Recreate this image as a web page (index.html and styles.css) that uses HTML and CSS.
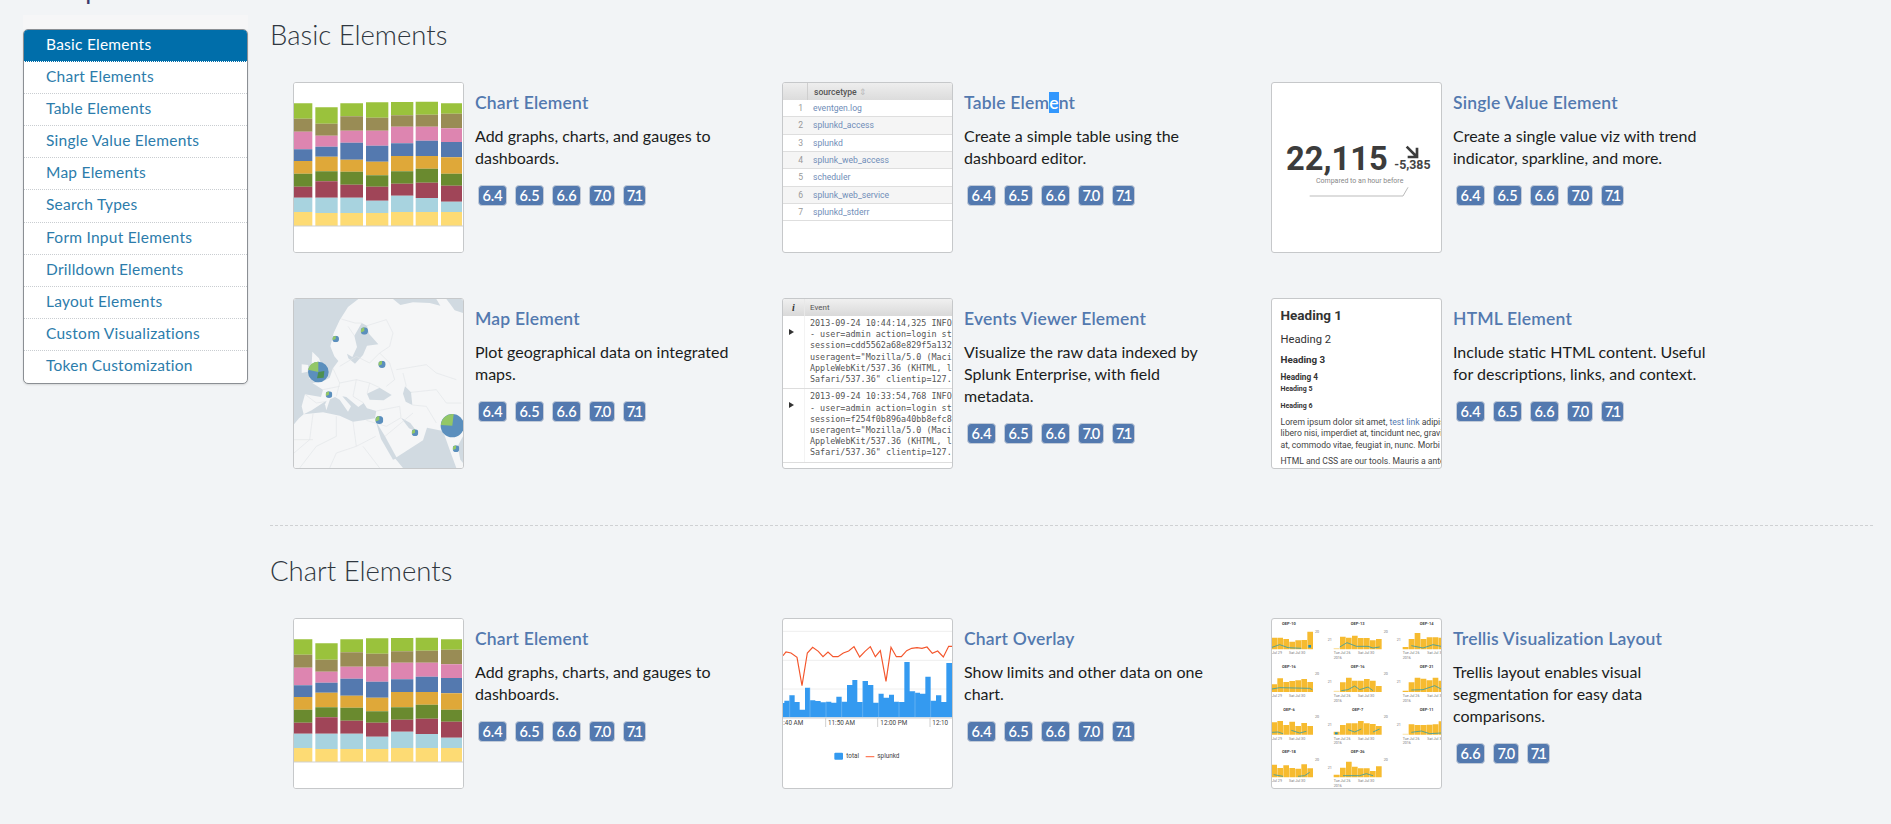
FILE: index.html
```html
<!DOCTYPE html>
<html lang="en">
<head>
<meta charset="utf-8">
<title>Examples</title>
<link rel="stylesheet" href="styles.css">
</head>
<body>
<svg class="defs" aria-hidden="true">
  <symbol id="stack" viewBox="42 40 507 507">
    <rect x="42" y="40" width="507" height="507" fill="#fff"/>
    <path fill="#9ac23c" d="M42 101H97V147H42ZM106 113H173V162H106ZM181 101H249V140H181ZM258 98H325V144H258ZM333 97H400V137H333ZM407 96H474V135H407ZM483 101H546V132H483Z"/>
    <path fill="#998c55" d="M42 147H97V186H42ZM106 162H173V198H106ZM181 140H249V183H181ZM258 144H325V183H258ZM333 137H400V171H333ZM407 135H474V171H407ZM483 132H546V176H483Z"/>
    <path fill="#dd85b0" d="M42 186H97V239H42ZM106 198H173V231H106ZM181 183H249V219H181ZM258 183H325V228H258ZM333 171H400V221H333ZM407 171H474V213H407ZM483 176H546V217H483Z"/>
    <path fill="#5479af" d="M42 239H97V274H42ZM106 231H173V261H106ZM181 219H249V270H181ZM258 228H325V276H258ZM333 221H400V259H333ZM407 213H474V259H407ZM483 217H546V263H483Z"/>
    <path fill="#dfa839" d="M42 274H97V312H42ZM106 261H173V305H106ZM181 270H249V306H181ZM258 276H325V317H258ZM333 259H400V305H333ZM407 259H474V297H407ZM483 263H546V312H483Z"/>
    <path fill="#6a8a2f" d="M42 312H97V351H42ZM106 305H173V335H106ZM181 306H249V345H181ZM258 317H325V351H258ZM333 305H400V342H333ZM407 297H474V339H407ZM483 312H546V348H483Z"/>
    <path fill="#a04558" d="M42 351H97V384H42ZM106 335H173V384H106ZM181 345H249V384H181ZM258 351H325V393H258ZM333 342H400V378H333ZM407 339H474V385H407ZM483 348H546V396H483Z"/>
    <path fill="#a8d3df" d="M42 384H97V427H42ZM106 384H173V430H106ZM181 384H249V430H181ZM258 393H325V430H258ZM333 378H400V427H333ZM407 385H474V427H407ZM483 396H546V427H483Z"/>
    <path fill="#fddb74" d="M42 427H97V468H42ZM106 430H173V468H106ZM181 430H249V468H181ZM258 430H325V468H258ZM333 427H400V468H333ZM407 427H474V468H407ZM483 427H546V468H483Z"/>
    <rect x="42" y="468" width="507" height="2" fill="#bbb"/>
  </symbol>
  <symbol id="minipie" viewBox="-10 -10 20 20">
    <circle r="10" fill="#5b8fbd"/>
    <path fill="#93c767" d="M0 0V-10A10 10 0 0 0 -9 4Z"/>
  </symbol>
</svg>

<h1 class="page-title">Examples</h1>

<div class="layout">
  <aside class="side">
    <div class="side-strip"></div>
    <ul class="menu">
      <li class="menu-item is-active"><a>Basic Elements</a></li>
      <li class="menu-item"><a>Chart Elements</a></li>
      <li class="menu-item"><a>Table Elements</a></li>
      <li class="menu-item"><a>Single Value Elements</a></li>
      <li class="menu-item"><a>Map Elements</a></li>
      <li class="menu-item"><a>Search Types</a></li>
      <li class="menu-item"><a>Form Input Elements</a></li>
      <li class="menu-item"><a>Drilldown Elements</a></li>
      <li class="menu-item"><a>Layout Elements</a></li>
      <li class="menu-item"><a>Custom Visualizations</a></li>
      <li class="menu-item"><a>Token Customization</a></li>
    </ul>
  </aside>

  <main class="main">
    <section class="section">
      <h2 class="section-title">Basic Elements</h2>
      <div class="cards">

        <article class="card">
          <div class="thumb"><svg class="art"><use href="#stack"/></svg></div>
          <div class="info">
            <h3 class="card-title">Chart Element</h3>
            <p class="card-desc">Add graphs, charts, and gauges to dashboards.</p>
            <div class="badges"><span class="badge">6.4</span><span class="badge">6.5</span><span class="badge">6.6</span><span class="badge">7.0</span><span class="badge">7.1</span></div>
          </div>
        </article>

        <article class="card">
          <div class="thumb">
            <div class="tbl">
              <div class="tbl-head"><span class="tbl-num"></span><span class="tbl-col">sourcetype <i class="tbl-sort">⇕</i></span></div>
              <div class="tbl-row"><span class="tbl-num">1</span><span class="tbl-name">eventgen.log</span></div>
              <div class="tbl-row tbl-alt"><span class="tbl-num">2</span><span class="tbl-name">splunkd_access</span></div>
              <div class="tbl-row"><span class="tbl-num">3</span><span class="tbl-name">splunkd</span></div>
              <div class="tbl-row tbl-alt"><span class="tbl-num">4</span><span class="tbl-name">splunk_web_access</span></div>
              <div class="tbl-row"><span class="tbl-num">5</span><span class="tbl-name">scheduler</span></div>
              <div class="tbl-row tbl-alt"><span class="tbl-num">6</span><span class="tbl-name">splunk_web_service</span></div>
              <div class="tbl-row"><span class="tbl-num">7</span><span class="tbl-name">splunkd_stderr</span></div>
            </div>
          </div>
          <div class="info">
            <h3 class="card-title">Table Elem<span class="selected">e</span>nt</h3>
            <p class="card-desc">Create a simple table using the dashboard editor.</p>
            <div class="badges"><span class="badge">6.4</span><span class="badge">6.5</span><span class="badge">6.6</span><span class="badge">7.0</span><span class="badge">7.1</span></div>
          </div>
        </article>

        <article class="card">
          <div class="thumb">
            <svg class="art" viewBox="37 40 507 507">
              <text class="sv-main" x="79" y="300">22,115</text>
              <path class="sv-arrow" d="M441 231L469 259M444 262H472V234"/>
              <text class="sv-delta" x="404" y="299">-5,385</text>
              <text class="sv-note" x="169" y="341">Compared to an hour before</text>
              <path class="sv-spark" d="M150 379H430L445 353"/>
            </svg>
          </div>
          <div class="info">
            <h3 class="card-title">Single Value Element</h3>
            <p class="card-desc">Create a single value viz with trend indicator, sparkline, and more.</p>
            <div class="badges"><span class="badge">6.4</span><span class="badge">6.5</span><span class="badge">6.6</span><span class="badge">7.0</span><span class="badge">7.1</span></div>
          </div>
        </article>

        <article class="card">
          <div class="thumb">
            <svg class="art" viewBox="43 28 507 507">
              <rect class="land" x="43" y="28" width="507" height="507"/>
              <path class="sea" d="M43 28H236L205 52L180 92L162 130L152 170L164 200L176 214L160 236L150 264L128 276L98 280L130 300L124 322L76 314L66 350L72 374L58 386L43 404Z"/>
              <path class="sea" d="M340 28H470L482 48L450 40L400 38L362 46Z"/>
              <path class="sea" d="M500 28H550V70L525 62L512 44Z"/>
              <path class="sea" d="M246 100L262 108L268 132L296 164L262 168L250 196L226 222L206 206L202 192L218 202L232 172L224 138Z"/>
              <path class="sea" d="M72 374L96 362L135 336L166 322L180 330L205 366L214 350L188 320L200 322L236 352L252 340L262 356L290 364L286 386L250 392L220 396L180 378L130 368Z"/>
              <path class="sea" d="M262 312L300 294L336 316L312 332L270 330Z"/>
              <path class="sea" d="M376 290L394 308L398 346L378 336L370 312Z"/>
              <path class="sea" d="M288 394L316 440L352 506L340 510L304 448Z"/>
              <path class="sea" d="M364 384L392 400L412 426L388 416Z"/>
              <path class="sea" d="M370 535L346 506L430 452L442 414L490 424L510 480L530 535Z"/>
              <path class="sea" d="M534 470L550 440V520L542 510Z"/>
              <path class="land" d="M98 186L118 206L128 232L140 256L112 260L88 268L110 240L96 224Z"/>
              <path class="land" d="M66 224L86 226L84 246L66 250Z"/>
              <path class="land" d="M140 362L152 326L146 322L136 344Z"/>
              <path class="map-lines" d="M185 88L226 100L246 100M205 110L224 138M262 108L320 90L340 130L330 170L300 190L330 220L345 270L320 290M180 230L230 200L270 220L300 190M160 236L180 280L230 270L270 280L300 294M180 280L170 320M230 270L220 320L252 340M270 280L262 312M130 300L180 290M76 314L110 340L135 336M350 240L440 225L470 250L530 270M370 250L380 290M394 308L470 300L500 340L545 340M398 346L440 350L470 400M290 364L360 350L364 384M260 392L320 410L364 384M100 372L90 450L43 490M170 380V440L110 470L60 535M220 396L230 470L170 490L150 535M288 440L230 470M250 470L300 535M316 440L400 370M43 450L100 450"/>
              <path class="big-pie" d="M116 247m-31 0a31 31 0 1 0 62 0a31 31 0 1 0-62 0"/>
              <path class="big-wedge" d="M116 247L116 216A31 31 0 0 0 85 240Z"/>
              <path class="deep-wedge" d="M116 247L134 244L132 264L112 266Z"/>
              <path class="big-pie" d="M518 408m-35 0a35 35 0 1 0 70 0a35 35 0 1 0-70 0"/>
              <path class="big-wedge" d="M518 408L522 373A35 35 0 0 0 484 406Z"/>
              <use href="#minipie" x="243" y="113" width="22" height="22"/>
              <use href="#minipie" x="158" y="138" width="20" height="20"/>
              <use href="#minipie" x="296" y="213" width="22" height="22"/>
              <use href="#minipie" x="138" y="305" width="20" height="20"/>
              <use href="#minipie" x="287" y="379" width="24" height="24"/>
              <use href="#minipie" x="396" y="419" width="20" height="20"/>
              <use href="#minipie" x="519" y="467" width="20" height="20"/>
            </svg>
          </div>
          <div class="info">
            <h3 class="card-title">Map Element</h3>
            <p class="card-desc">Plot geographical data on integrated maps.</p>
            <div class="badges"><span class="badge">6.4</span><span class="badge">6.5</span><span class="badge">6.6</span><span class="badge">7.0</span><span class="badge">7.1</span></div>
          </div>
        </article>

        <article class="card">
          <div class="thumb">
            <div class="ev">
              <div class="ev-head"><span class="ev-gutter ev-i">i</span><span class="ev-col">Event</span></div>
              <div class="ev-row"><span class="ev-gutter"><b class="ev-arrow"></b></span><pre class="ev-text">2013-09-24 10:44:14,325 INFO
- user=admin action=login st
session=cdd5562a68e829f5a132
useragent="Mozilla/5.0 (Maci
AppleWebKit/537.36 (KHTML, l
Safari/537.36" clientip=127.</pre></div>
              <div class="ev-row"><span class="ev-gutter"><b class="ev-arrow"></b></span><pre class="ev-text">2013-09-24 10:33:54,768 INFO
- user=admin action=login st
session=f254f0b896a40bb8efc8
useragent="Mozilla/5.0 (Maci
AppleWebKit/537.36 (KHTML, l
Safari/537.36" clientip=127.</pre></div>
            </div>
          </div>
          <div class="info">
            <h3 class="card-title">Events Viewer Element</h3>
            <p class="card-desc">Visualize the raw data indexed by Splunk Enterprise, with field metadata.</p>
            <div class="badges"><span class="badge">6.4</span><span class="badge">6.5</span><span class="badge">6.6</span><span class="badge">7.0</span><span class="badge">7.1</span></div>
          </div>
        </article>

        <article class="card">
          <div class="thumb">
            <div class="doc">
              <div class="doc-h1">Heading 1</div>
              <div class="doc-h2">Heading 2</div>
              <div class="doc-h3">Heading 3</div>
              <div class="doc-h4">Heading 4</div>
              <div class="doc-h5">Heading 5</div>
              <div class="doc-h6">Heading 6</div>
              <div class="doc-p">Lorem ipsum dolor sit amet, <span class="doc-link">test link</span> adipiscing
libero nisi, imperdiet at, tincidunt nec, gravida
at, commodo vitae, feugiat in, nunc. Morbi</div>
              <div class="doc-p2">HTML and CSS are our tools. Mauris a ante</div>
            </div>
          </div>
          <div class="info">
            <h3 class="card-title">HTML Element</h3>
            <p class="card-desc">Include static HTML content. Useful for descriptions, links, and context.</p>
            <div class="badges"><span class="badge">6.4</span><span class="badge">6.5</span><span class="badge">6.6</span><span class="badge">7.0</span><span class="badge">7.1</span></div>
          </div>
        </article>
      </div>
    </section>

    <hr class="divider">

    <section class="section">
      <h2 class="section-title">Chart Elements</h2>
      <div class="cards">
        <article class="card">
          <div class="thumb"><svg class="art"><use href="#stack"/></svg></div>
          <div class="info">
            <h3 class="card-title">Chart Element</h3>
            <p class="card-desc">Add graphs, charts, and gauges to dashboards.</p>
            <div class="badges"><span class="badge">6.4</span><span class="badge">6.5</span><span class="badge">6.6</span><span class="badge">7.0</span><span class="badge">7.1</span></div>
          </div>
        </article>

        <article class="card">
          <div class="thumb">
            <svg class="art" viewBox="41 28 507 507">
              <path class="ov-grid" d="M41 65H548M41 152H548M41 238H548"/>
              <path class="ov-bars" d="M41 323V280H45V273H60V257H76V277H91V300H107V234H122V272H138V274H154V278H170V276H186V279H201V261H217V276H233V226H249V211H264V277H280V214H296V226H312V279H328V252H343V264H359V255H374V276H389V277H405V157H421V245H437V249H452V252H468V201H484V273H500V257H516V277H531V160H548V323Z"/>
              <path class="ov-seps" d="M61 323V257M122 323V234M170 323V276M217 323V276M280 323V214M328 323V252M389 323V277M437 323V245M484 323V273"/>
              <path class="ov-line" d="M41 138L50 127L65 130L83 143L98 228L114 130L130 113L147 125L161 141L176 127L191 141L206 141L222 130L238 124L254 111L271 142L287 125L303 111L318 141L333 123L350 215L365 113L381 141L396 141L412 123L427 116L443 114L458 116L473 112L489 131L505 124L522 142L538 110L548 110"/>
              <path class="ov-axis" d="M41 325H548M169 325V352M325 325V352M482 325V352"/>
              <text class="ov-tick" x="42" y="346">:40 AM</text>
              <text class="ov-tick" x="176" y="346">11:50 AM</text>
              <text class="ov-tick" x="333" y="346">12:00 PM</text>
              <text class="ov-tick" x="489" y="346">12:10</text>
              <rect class="ov-key" x="195" y="429" width="26" height="21" rx="3"/>
              <text class="ov-tick" x="231" y="446">total</text>
              <path class="ov-keyline" d="M289 441H315"/>
              <text class="ov-tick" x="324" y="446">splunkd</text>
            </svg>
          </div>
          <div class="info">
            <h3 class="card-title">Chart Overlay</h3>
            <p class="card-desc">Show limits and other data on one chart.</p>
            <div class="badges"><span class="badge">6.4</span><span class="badge">6.5</span><span class="badge">6.6</span><span class="badge">7.0</span><span class="badge">7.1</span></div>
          </div>
        </article>

        <article class="card">
          <div class="thumb">
            <svg class="art" viewBox="37 28 507 507">
              <path class="tr-bars" d="M37 119V84H52V119ZM53 119V84H70V119ZM71 119V88H88V119ZM89 119V96H106V119ZM107 119V92H124V119ZM125 119V91H142V119ZM143 119V66H160V119Z
              M241 119V81H258V119ZM259 119V84H276V119ZM277 119V78H294V119ZM295 119V85H312V119ZM313 119V85H330V119ZM331 119V92H348V119ZM349 119V88H366V119Z
              M429 119V112H446V119ZM447 119V88H464V119ZM465 119V70H482V119ZM483 119V88H500V119ZM501 119V83H518V119ZM519 119V83H536V119ZM537 119V84H544V119Z
              M37 247V224H52V247ZM53 247V206H70V247ZM71 247V217H88V247ZM89 247V214H106V247ZM107 247V212H124V247ZM125 247V208H142V247ZM143 247V217H160V247Z
              M241 247V218H258V247ZM259 247V204H276V247ZM277 247V213H294V247ZM295 247V213H312V247ZM313 247V208H330V247ZM331 247V213H348V247ZM349 247V229H366V247Z
              M429 247V243H446V247ZM447 247V218H464V247ZM465 247V204H482V247ZM483 247V207H500V247ZM501 247V212H518V247ZM519 247V204H536V247ZM537 247V213H544V247Z
              M37 375V338H52V375ZM53 375V334H70V375ZM71 375V346H88V375ZM89 375V336H106V375ZM107 375V349H124V375ZM125 375V340H142V375ZM143 375V349H160V375Z
              M222 375V366H240V375ZM241 375V346H258V375ZM259 375V341H276V375ZM277 375V341H294V375ZM295 375V334H312V375ZM313 375V341H330V375ZM331 375V343H348V375ZM349 375V349H366V375Z
              M447 375V344H464V375ZM465 375V346H482V375ZM483 375V346H500V375ZM501 375V345H518V375ZM519 375V344H536V375ZM537 375V335H544V375Z
              M37 503V465H52V503ZM53 503V475H70V503ZM71 503V467H88V503ZM89 503V475H106V503ZM107 503V477H124V503ZM125 503V464H142V503ZM143 503V476H160V503Z
              M222 503V495H240V503ZM241 503V474H258V503ZM259 503V456H276V503ZM277 503V471H294V503ZM295 503V476H312V503ZM313 503V476H330V503ZM331 503V484H348V503ZM349 503V470H366V503Z"/>
              <path class="tr-faint" d="M222 119V115H240V119ZM429 375V372H446V375ZM222 247V243H240V247Z"/>
              <path class="tr-line" d="M37 113L60 105L85 114L125 116M240 112L262 99L290 110L325 110L340 115L360 112M455 108L490 115L520 105L544 110M37 238L60 234L150 236L158 240M245 243L265 240L285 229L300 240L325 232L340 243M455 241L490 240L525 228L544 238M37 368L55 367L70 372M95 362L120 370L140 365M265 360L285 367L305 358M340 367L360 358M455 368L485 364L510 372L544 370M42 495L70 500M115 500L135 498L150 488M250 498L300 498L320 492L340 498"/>
              <rect class="tr-mark" x="146" y="106" width="8" height="8"/>
              <rect class="tr-mark" x="226" y="368" width="8" height="6"/>
              <text class="tr-title" x="88" y="47">OEP-10</text><text class="tr-title" x="294" y="47">OEP-13</text><text class="tr-title" x="501" y="47">OEP-14</text>
              <text class="tr-title" x="88" y="175">OEP-16</text><text class="tr-title" x="294" y="175">OEP-16</text><text class="tr-title" x="501" y="175">OEP-21</text>
              <text class="tr-title" x="88" y="303">OEP-6</text><text class="tr-title" x="294" y="303">OEP-7</text><text class="tr-title" x="501" y="303">OEP-11</text>
              <text class="tr-title" x="88" y="431">OEP-18</text><text class="tr-title" x="294" y="431">OEP-26</text>
              <text class="tr-tick" x="166" y="69">20</text><text class="tr-tick" x="372" y="69">20</text><text class="tr-tick" x="204" y="93">21</text><text class="tr-tick" x="411" y="93">21</text>
              <text class="tr-tick" x="166" y="197">20</text><text class="tr-tick" x="372" y="197">20</text><text class="tr-tick" x="204" y="221">21</text><text class="tr-tick" x="411" y="221">21</text>
              <text class="tr-tick" x="166" y="325">20</text><text class="tr-tick" x="372" y="325">20</text><text class="tr-tick" x="204" y="349">21</text><text class="tr-tick" x="411" y="349">21</text>
              <text class="tr-tick" x="166" y="454">20</text><text class="tr-tick" x="372" y="454">20</text><text class="tr-tick" x="204" y="478">21</text>
              <text class="tr-tick" x="37" y="134">Jul 29</text><text class="tr-tick" x="88" y="134">Sat Jul 30</text><text class="tr-tick" x="222" y="134">Tue Jul 26</text><text class="tr-tick" x="295" y="134">Sat Jul 30</text><text class="tr-tick" x="429" y="134">Tue Jul 26</text><text class="tr-tick" x="503" y="134">Sat Jul 30</text>
              <text class="tr-tick" x="37" y="262">Jul 29</text><text class="tr-tick" x="88" y="262">Sat Jul 30</text><text class="tr-tick" x="222" y="262">Tue Jul 26</text><text class="tr-tick" x="295" y="262">Sat Jul 30</text><text class="tr-tick" x="429" y="262">Tue Jul 26</text><text class="tr-tick" x="503" y="262">Sat Jul 30</text>
              <text class="tr-tick" x="37" y="390">Jul 29</text><text class="tr-tick" x="88" y="390">Sat Jul 30</text><text class="tr-tick" x="222" y="390">Tue Jul 26</text><text class="tr-tick" x="295" y="390">Sat Jul 30</text><text class="tr-tick" x="429" y="390">Tue Jul 26</text><text class="tr-tick" x="503" y="390">Sat Jul 30</text>
              <text class="tr-tick" x="37" y="518">Jul 29</text><text class="tr-tick" x="88" y="518">Sat Jul 30</text><text class="tr-tick" x="222" y="518">Tue Jul 26</text><text class="tr-tick" x="295" y="518">Sat Jul 30</text>
              <text class="tr-tick" x="222" y="148">2016</text><text class="tr-tick" x="429" y="148">2016</text><text class="tr-tick" x="222" y="276">2016</text><text class="tr-tick" x="429" y="276">2016</text><text class="tr-tick" x="222" y="404">2016</text><text class="tr-tick" x="429" y="404">2016</text><text class="tr-tick" x="222" y="532">2016</text>
            </svg>
          </div>
          <div class="info">
            <h3 class="card-title">Trellis Visualization Layout</h3>
            <p class="card-desc">Trellis layout enables visual segmentation for easy data comparisons.</p>
            <div class="badges"><span class="badge">6.6</span><span class="badge">7.0</span><span class="badge">7.1</span></div>
          </div>
        </article>
      </div>
    </section>
  </main>
</div>
</body>
</html>
```
FILE: styles.css
```css
* { box-sizing: border-box; }
html, body { height: 100%; overflow: hidden; }
body {
  margin: 0;
  background: #f2f4f6;
  color: #1a1c20;
  font-family: "Lato", "Liberation Sans", sans-serif;
}
.defs { display: none; }

.page-title {
  margin: -26px 0 -4px;
  padding-left: 23px;
  height: 30px;
  font-size: 26px;
  line-height: 30px;
  font-weight: 400;
  color: #3c3a6a;
}

.layout { display: flex; align-items: flex-start; }

.side { flex: none; width: 225px; margin-left: 23px; margin-top: 15px; }
.side-strip { height: 14px; background: #f6f6f7; }
.menu {
  list-style: none;
  margin: 0;
  padding: 0;
  background: #fff;
  border: 1px solid #8b8f94;
  border-radius: 5px;
  overflow: hidden;
  box-shadow: 0 1px 2px rgba(0,0,0,.12);
}
.menu-item {
  height: 32.1px;
  padding-left: 22px;
  font-size: 15.5px;
  letter-spacing: .25px;
  line-height: 29.5px;
  color: #2c7cab;
  border-bottom: 1px dotted #c9cdd1;
}
.menu-item:last-child { border-bottom: 0; }
.menu-item.is-active { background: #006eaa; color: #fff; border-bottom-color: #fff; }

.main { flex: 1; min-width: 0; margin-left: 22px; padding-top: 18px; }
.section-title {
  margin: 0 0 30px;
  font-size: 27.5px;
  line-height: 34px;
  font-weight: 300;
  color: #2f3740;
}
.cards {
  display: grid;
  grid-template-columns: repeat(3, 489px);
  row-gap: 45px;
  padding-left: 23px;
}
.card { display: flex; align-items: flex-start; }
.thumb {
  flex: none;
  width: 171px;
  height: 171px;
  background: #fff;
  border: 1px solid #c6c8ca;
  border-radius: 3px;
  overflow: hidden;
}
.art { display: block; width: 169px; height: 169px; }

.info { width: 262px; margin-left: 11px; padding-top: 10px; }
.card-title {
  margin: 0;
  font-size: 17.5px;
  letter-spacing: .2px;
  line-height: 22px;
  font-weight: 600;
  color: #5379af;
}
.selected { background: #3297fd; color: #fff; }
.card-desc {
  margin: 11px 0 0;
  font-size: 16px;
  line-height: 22px;
  color: #1a1c20;
}
.badges { display: flex; gap: 8px; margin: 16px 0 0 3px; }
.badge {
  height: 21px;
  padding: 0 3.4px;
  background: #5379af;
  border: 1px solid #c2cbd8;
  border-radius: 4px;
  color: #fff;
  font-size: 14.5px;
  line-height: 19px;
  font-weight: 600;
}
.badge:nth-last-child(2) { letter-spacing: -1.3px; padding-right: 4.4px; }
.badge:last-child { letter-spacing: -2px; padding-right: 4.4px; padding-left: 2.6px; }
.divider {
  margin: 56px 18px 28px 0;
  height: 0;
  border: 0;
  border-top: 1px dashed #cfd1d3;
}

/* table thumbnail */
.tbl { font-family: "Roboto", sans-serif; font-size: 8.6px; color: #6f8db8; }
.tbl-head {
  display: flex;
  height: 17px;
  align-items: center;
  background: linear-gradient(#eeeeee, #dcdcdc);
  color: #555;
  font-weight: 500;
}
.tbl-head .tbl-num { height: 100%; border-right: 1px solid #cfcfcf; }
.tbl-col { padding-left: 6px; }
.tbl-sort { color: #bbb; font-style: normal; }
.tbl-row { display: flex; height: 17.33px; align-items: center; border-bottom: 1px solid #dedede; }
.tbl-alt { background: #f5f5f5; }
.tbl-num { flex: none; width: 25px; padding-right: 5px; text-align: right; color: #999; }
.tbl-name { padding-left: 5px; }

/* events thumbnail */
.ev-head {
  display: flex;
  height: 17px;
  align-items: center;
  background: linear-gradient(#f0f0f0, #d9d9d9);
  font-family: "Roboto", sans-serif;
  font-size: 8px;
  color: #555;
}
.ev-gutter { flex: none; width: 22px; height: 100%; text-align: center; }
.ev-head .ev-gutter { border-right: 1px solid #e8e8e8; line-height: 17px; }
.ev-i { font-family: "Liberation Serif", serif; font-style: italic; font-weight: 700; font-size: 10px; color: #333; }
.ev-col { padding-left: 5px; }
.ev-row { display: flex; height: 73.3px; background: #fff; border-bottom: 1px solid #ddd; }
.ev-row .ev-gutter { padding: 3px 4px 0 0; border-right: 1px solid #f3f3f3; }
.ev-arrow {
  display: inline-block;
  width: 0;
  height: 0;
  border-left: 5px solid #333;
  border-top: 3.5px solid transparent;
  border-bottom: 3.5px solid transparent;
}
.ev-text {
  margin: 0;
  padding: 2px 0 0 5px;
  font-family: "DejaVu Sans Mono", monospace;
  font-size: 8.42px;
  line-height: 11.2px;
  color: #555;
}

/* html thumbnail */
.doc {
  padding: 9px 0 0 8.5px;
  font-family: "Roboto", sans-serif;
  color: #333;
  white-space: nowrap;
}
.doc-h1 { font-size: 13.5px; line-height: 14px; font-weight: 700; }
.doc-h2 { margin-top: 11px; font-size: 11.2px; line-height: 14px; }
.doc-h3 { margin-top: 7px; font-size: 9.8px; line-height: 12px; font-weight: 700; }
.doc-h4 { margin-top: 6px; font-size: 8.2px; line-height: 11px; font-weight: 700; }
.doc-h5 { margin-top: 1px; font-size: 7px; line-height: 11px; font-weight: 700; }
.doc-h6 { margin-top: 6px; font-size: 7px; line-height: 11px; font-weight: 700; }
.doc-p { margin-top: 5px; font-size: 8.6px; line-height: 11.3px; white-space: pre; color: #444; }
.doc-link { color: #5379af; }
.doc-p2 { margin-top: 5px; font-size: 8.6px; line-height: 11.3px; color: #444; }

/* single value thumbnail */
.sv-main { font: 700 98px "Roboto", sans-serif; fill: #3c3c3c; }
.sv-delta { font: 700 37px "Roboto", sans-serif; fill: #444; }
.sv-note { font: 400 21px "Roboto", sans-serif; fill: #888; }
.sv-arrow { fill: none; stroke: #3c3c3c; stroke-width: 8; }
.sv-spark { fill: none; stroke: #bbb; stroke-width: 3; }

/* map thumbnail */
.land { fill: #f5f6f7; }
.sea { fill: #d1dae1; }
.map-lines { fill: none; stroke: #e2e5e8; stroke-width: 2; }
.big-pie { fill: #5b8fbd; }
.big-wedge { fill: #93c767; }
.deep-wedge { fill: #4c8f4f; }

/* overlay thumbnail */
.ov-grid { fill: none; stroke: #eeeeee; stroke-width: 3; }
.ov-bars { fill: #349af0; }
.ov-seps { fill: none; stroke: #8cc6f6; stroke-width: 1.5; }
.ov-line { fill: none; stroke: #f4562c; stroke-width: 3.5; }
.ov-axis { fill: none; stroke: #d0d0d0; stroke-width: 3; }
.ov-tick { font: 400 19px "Roboto", sans-serif; fill: #444; }
.ov-key { fill: #349af0; }
.ov-keyline { fill: none; stroke: #ff7e5c; stroke-width: 4; }

/* trellis thumbnail */
.tr-bars { fill: #f6bb30; }
.tr-faint { fill: #fbe3a6; }
.tr-line { fill: none; stroke: #3a9ea5; stroke-width: 2.5; }
.tr-mark { fill: #1b8fc0; }
.tr-title { font: 700 12px "Roboto", sans-serif; fill: #444; text-anchor: middle; }
.tr-tick { font: 400 11px "Roboto", sans-serif; fill: #777; }
```
